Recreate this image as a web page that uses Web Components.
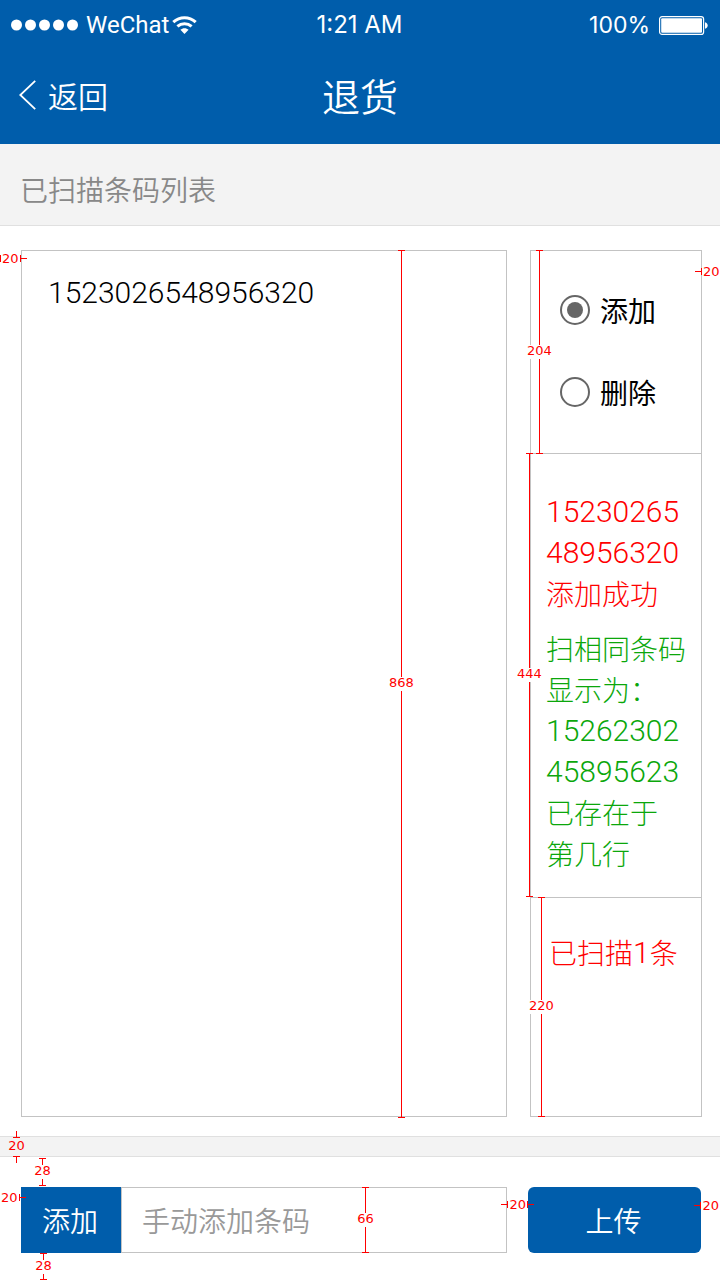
<!DOCTYPE html>
<html lang="zh-CN">
<head>
<meta charset="utf-8">
<meta name="viewport" content="width=device-width, initial-scale=1">
<title>退货</title>
<style>
  html { overflow-x: hidden; }
  body {
    margin: 0;
    background: #fff;
    color: #000;
    font: 300 28px/41px "Noto Sans CJK SC", sans-serif;
    --brand: #005dab;
    --line: #c3c3c3;
    --rule: #e0e0e0;
    --band: #f3f3f3;
    --red: #f00;
    --green: #0ba70b;
    --digits: Roboto, "Noto Sans CJK SC", sans-serif;
  }
</style>
</head>
<body>
<returns-page></returns-page>

<script>
function define(name, html, setup) {
  const template = document.createElement('template');
  template.innerHTML = html;
  customElements.define(name, class extends HTMLElement {
    connectedCallback() {
      if (this.shadowRoot) return;
      const root = this.attachShadow({ mode: 'open' });
      root.append(template.content.cloneNode(true));
      if (setup) setup(this, root);
    }
  });
}

/* Dimension mark: axis="x|y"; "outside" puts the stubs beyond the end caps. */
define('dim-mark', `
  <style>
    :host { position: absolute; z-index: 2; display: flex; align-items: center; pointer-events: none;
      color: var(--red); font: 400 13px/15px "DejaVu Sans", sans-serif; }
    :host([axis="y"]) { flex-direction: column; width: 31px; margin-left: -15px; }
    :host([axis="x"]) { height: 15px; gap: 1px; }
    i { background: var(--red); flex: none; }
    :host([axis="y"]) .cap { width: 7px; height: 1px; }
    :host([axis="y"]) .stem { width: 1px; flex: 1 1 6px; }
    :host([axis="x"]) .cap { width: 1px; height: 7px; }
    :host([axis="x"]) .stem { width: 6px; height: 1px; margin: 0 -1px; }
    :host([outside]) .start.stem { order: -1; }
    :host([outside]) .end.stem { order: 1; }
    span { background: #fff; }
    :host([axis="y"]) span { line-height: 11px; padding-bottom: 3px; }
    :host([axis="y"][outside]) span { line-height: 16px; padding-bottom: 2px; }
    :host([outside]) span { background: none; }
    :host([axis="y"][outside]) .end.cap { order: 0; }
  </style>
  <i class="start cap"></i><i class="start stem"></i>
  <span><slot></slot></span>
  <i class="end stem"></i><i class="end cap"></i>
`);

define('status-bar', `
  <style>
    :host { display: grid; grid-template-columns: 1fr auto 1fr; align-items: center; height: 50px;
      padding: 0 12px 0 11px; color: #fff; font: 400 24px/30px Inter, sans-serif; }
    .side { display: flex; align-items: center; }
    .right { justify-content: flex-end; gap: 9px; font-size: 23px; }
    .carrier { font-family: Roboto, sans-serif; }
    .dots { margin-right: 8px; }
    .wifi { margin-left: 3px; }
  </style>
  <div class="side">
    <svg class="dots" width="67" height="12" viewBox="0 0 67 12" fill="#fff" aria-hidden="true">
      <circle cx="5.5" cy="6" r="5.5"/><circle cx="19.5" cy="6" r="5.5"/><circle cx="33.5" cy="6" r="5.5"/><circle cx="47.5" cy="6" r="5.5"/><circle cx="61.5" cy="6" r="5.5"/>
    </svg>
    <span class="carrier">WeChat</span>
    <svg class="wifi" width="25" height="18" viewBox="0 0 25 18" fill="none" stroke="#fff" stroke-width="3" aria-hidden="true">
      <path d="M1.3 6.2C7.8.1 17.2.1 23.7 6.2"/>
      <path d="M5.4 10.4C9.5 6.7 15.5 6.7 19.6 10.4"/>
      <path d="M12.5 18L8.4 13.8C10.7 11.7 14.3 11.7 16.6 13.8Z" fill="#fff" stroke="none"/>
    </svg>
  </div>
  <span>1:21 AM</span>
  <div class="side right">
    <span>100%</span>
    <svg width="49" height="19" viewBox="0 0 49 19" aria-hidden="true">
      <rect x=".6" y=".6" width="44" height="17.8" rx="2.5" fill="none" stroke="#fff" stroke-width="1.2"/>
      <rect x="2.2" y="2.2" width="40.8" height="14.6" rx="1" fill="#fff"/>
      <path d="M46 6.2C49.6 6.8 49.6 12.2 46 12.8Z" fill="#fff"/>
    </svg>
  </div>
`);

define('nav-bar', `
  <style>
    :host { display: grid; grid-template-columns: 1fr auto 1fr; align-items: center; height: 90px;
      padding: 0 19px 4px; color: #fff; font-weight: 350; }
    a { display: flex; align-items: center; gap: 12px; color: inherit; text-decoration: none;
      font-size: 30px; justify-self: start; }
    h1 { margin: 0; font-size: 38px; line-height: 56px; font-weight: inherit; }
  </style>
  <a href="#back">
    <svg width="17" height="30" viewBox="0 0 17 30" fill="none" stroke="#fff" stroke-width="1.8" aria-hidden="true"><path d="M16.2.8L1.3 15L16.2 29.2"/></svg>
    <span>返回</span>
  </a>
  <h1><slot></slot></h1>
`);

define('section-bar', `
  <style>
    :host { display: block; background: var(--band); border-bottom: 1px solid var(--rule);
      padding: 25px 20px 15px; color: #888; }
    h2 { margin: 0; font-size: 28px; font-weight: 350; }
  </style>
  <h2><slot></slot></h2>
`);

define('radio-option', `
  <style>
    :host { display: block; }
    label { display: flex; align-items: center; gap: 10px; font-weight: 400; }
    input { appearance: none; flex: none; margin: 0 0 2px; width: 30px; height: 30px; border: 2px solid #666;
      border-radius: 50%; display: grid; place-items: center; }
    input:checked::before { content: ""; width: 16px; height: 16px; border-radius: 50%; background: #666; }
  </style>
  <label><input type="radio"><slot></slot></label>
`, (host, root) => {
  const input = root.querySelector('input');
  input.name = 'mode';
  input.checked = host.hasAttribute('checked');
  input.addEventListener('change', () => {
    for (const other of host.parentNode.querySelectorAll('radio-option')) {
      if (other !== host) other.shadowRoot.querySelector('input').checked = false;
    }
  });
});

define('scan-list', `
  <style>
    :host { display: block; position: relative; border: 1px solid var(--line); }
    ul { list-style: none; margin: 0; padding: 21px 26px; font-family: var(--digits); font-size: 30px; }
    dim-mark { left: 379px; top: -1px; bottom: -2px; }
  </style>
  <ul><slot></slot></ul>
  <dim-mark axis="y">868</dim-mark>
`);

define('scan-side', `
  <style>
    :host { display: grid; grid-template-rows: 202fr 444fr 219fr; border: 1px solid var(--line); }
    section { position: relative; }
    section + section { border-top: 1px solid var(--line); }
    .modes { padding: 39px 29px; display: flex; flex-direction: column; gap: 41px; }
    .log { padding: 37px 11px 0 15px; word-break: break-all; }
    p { margin: 0 0 14px; }
    .ok { color: var(--red); }
    .dup { color: var(--green); }
    .total { padding: 34px 18px; color: var(--red); }
    b { font: 300 30px/41px var(--digits); vertical-align: top; }
    .m1 { left: 8px; top: -1px; bottom: -1px; }
    .m2 { left: -2px; top: -1px; bottom: 0; }
    .m3 { left: 10px; top: -1px; bottom: -1px; }
    .m4 { left: 165px; top: 13px; }
  </style>
  <section class="modes">
    <radio-option checked>添加</radio-option>
    <radio-option>删除</radio-option>
    <dim-mark class="m1" axis="y">204</dim-mark>
    <dim-mark class="m4" axis="x" outside>20</dim-mark>
  </section>
  <section class="log">
    <p class="ok"><b>1523026548956320</b><br>添加成功</p>
    <p class="dup">扫相同条码<br>显示为：<br><b>1526230245895623</b><br>已存在于<br>第几行</p>
    <dim-mark class="m2" axis="y">444</dim-mark>
  </section>
  <section class="total">
    已扫描<b>1</b>条
    <dim-mark class="m3" axis="y">220</dim-mark>
  </section>
`);

define('divider-band', `
  <style>
    :host { display: block; position: relative; height: 19px; background: var(--band);
      border: solid var(--rule); border-width: 1px 0; }
    dim-mark { left: 16px; top: -6px; bottom: -7px; }
  </style>
  <dim-mark axis="y" outside>20</dim-mark>
`);

define('entry-bar', `
  <style>
    :host { display: grid; grid-template-columns: 1fr 173px; gap: 21px; position: relative;
      padding: 30px 19px 27px 21px; }
    form { display: flex; height: 66px; position: relative; }
    button { border: 0; padding: 0 2px 0 0; background: var(--brand); color: #fff; font: inherit; font-weight: 350; }
    .add { width: 100px; flex: none; }
    .send { border-radius: 6px; }
    input { flex: 1; min-width: 0; box-sizing: border-box; border: 1px solid var(--line); border-radius: 0;
      padding: 0 20px; background: #fff; font: inherit; font-weight: 350; color: #000; outline: 0; }
    input::placeholder { color: #999; opacity: 1; }
    .h { left: 344px; top: 0; bottom: 0; }
    .above { left: 42px; top: 1px; height: 28px; }
    .below { left: 43px; bottom: 0; height: 27px; }
    .left { left: -6px; top: 33px; }
    .mid { right: 187px; top: 40px; }
    .right { right: -6px; top: 41px; }
  </style>
  <form onsubmit="return false">
    <button class="add" type="button">添加</button>
    <input type="text" placeholder="手动添加条码" aria-label="手动添加条码">
    <dim-mark class="h" axis="y">66</dim-mark>
  </form>
  <button class="send" type="button">上传</button>
  <dim-mark class="above" axis="y">28</dim-mark>
  <dim-mark class="below" axis="y">28</dim-mark>
  <dim-mark class="left" axis="x" outside>20</dim-mark>
  <dim-mark class="mid" axis="x" outside>20</dim-mark>
  <dim-mark class="right" axis="x" outside>20</dim-mark>
`);

define('returns-page', `
  <style>
    :host { display: flex; flex-direction: column; min-height: 100vh; overflow: hidden; }
    header { background: var(--brand); }
    main { flex: 1; position: relative; display: grid; grid-template-columns: 1fr 172px; gap: 23px;
      padding: 24px 18px 19px 21px; }
    dim-mark { left: -5px; top: 25px; }
  </style>
  <header>
    <status-bar></status-bar>
    <nav-bar>退货</nav-bar>
  </header>
  <section-bar>已扫描条码列表</section-bar>
  <main>
    <scan-list><li>1523026548956320</li></scan-list>
    <scan-side></scan-side>
    <dim-mark axis="x" outside>20</dim-mark>
  </main>
  <divider-band></divider-band>
  <entry-bar></entry-bar>
`);
</script>
</body>
</html>
